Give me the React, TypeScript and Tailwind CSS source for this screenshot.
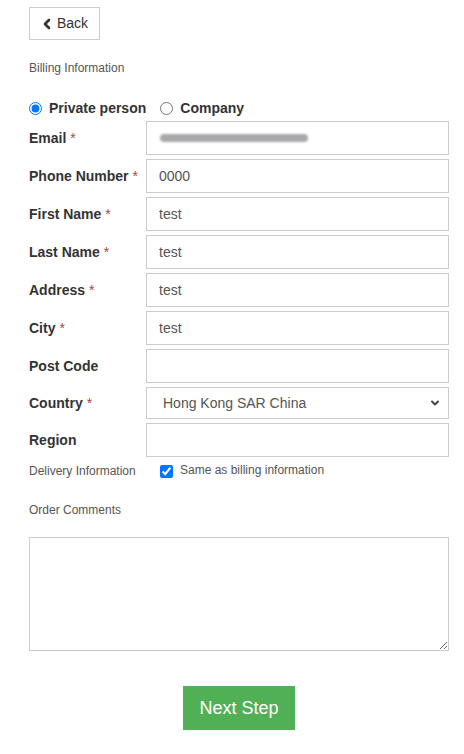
import React from 'react';
import { ChevronLeft, ChevronDown } from 'lucide-react';

interface Field {
  label: string;
  required?: boolean;
  value?: string;
}

const fields: Field[] = [
  { label: 'Phone Number', required: true, value: '0000' },
  { label: 'First Name', required: true, value: 'test' },
  { label: 'Last Name', required: true, value: 'test' },
  { label: 'Address', required: true, value: 'test' },
  { label: 'City', required: true, value: 'test' },
  { label: 'Post Code', value: '' },
];

const Label = ({ text, required }: { text: string; required?: boolean }) => (
  <label className="w-[117px] shrink-0 text-[14px] font-bold text-[#333]">
    {text}
    {required && <span className="ml-1 font-normal text-[#a94442]">*</span>}
  </label>
);

const inputCls =
  'h-[34px] w-full border border-[#ccc] bg-white px-[12px] text-[14px] text-[#555] outline-none';

export default function App() {
  return (
    <div className="min-h-screen bg-white pt-[7px] pl-[29px] pr-[15px] font-['Liberation_Sans',Arial,sans-serif]">
      <button className="flex h-[33px] w-[71px] items-center justify-center gap-[2px] border border-[#ccc] bg-white text-[14px] text-[#333]">
        <ChevronLeft className="h-[16px] w-[16px] -ml-[2px]" strokeWidth={4} />
        Back
      </button>

      <div className="mt-[20px] text-[12px] leading-[16px] text-[#555]">Billing Information</div>

      <div className="mt-[22px] flex h-[20px] items-center text-[14px] font-bold text-[#333]">
        <label className="flex items-center">
          <input type="radio" name="type" defaultChecked className="m-0 h-[13px] w-[13px]" />
          <span className="ml-[7px]">Private person</span>
        </label>
        <label className="ml-[14px] flex items-center">
          <input type="radio" name="type" className="m-0 h-[13px] w-[13px]" />
          <span className="ml-[7px]">Company</span>
        </label>
      </div>

      <div className="mt-[3px] flex flex-col gap-[4px]">
        <div className="flex items-center">
          <Label text="Email" required />
          <div className="relative w-full">
            <input className={inputCls} defaultValue="" />
            <span className="pointer-events-none absolute left-[14px] top-[13px] h-[8px] w-[148px] rounded-full bg-[#a8a8aa] blur-[1px]" />
          </div>
        </div>
        {fields.map((f) => (
          <div key={f.label} className="flex items-center">
            <Label text={f.label} required={f.required} />
            <input className={inputCls} defaultValue={f.value} />
          </div>
        ))}
        <div className="flex items-center">
          <Label text="Country" required />
          <div className="relative w-full">
            <select className="h-[32px] w-full appearance-none border border-[#ccc] bg-white pl-[16px] text-[14px] text-[#555] outline-none">
              <option>Hong Kong SAR China</option>
            </select>
            <ChevronDown
              className="pointer-events-none absolute right-[8px] top-[10px] h-[12px] w-[12px] text-[#444]"
              strokeWidth={4}
            />
          </div>
        </div>
        <div className="flex items-center">
          <Label text="Region" />
          <input className={inputCls} defaultValue="" />
        </div>
      </div>

      <div className="mt-[6px] flex h-[16px] items-center text-[12px] text-[#555]">
        <span className="w-[131px] shrink-0">Delivery Information</span>
        <label className="flex items-center">
          <input type="checkbox" defaultChecked className="m-0 h-[13px] w-[13px]" />
          <span className="ml-[7px] -mt-[3px]">Same as billing information</span>
        </label>
      </div>

      <div className="mt-[23px] text-[12px] leading-[16px] text-[#555]">Order Comments</div>

      <textarea className="mt-[19px] block h-[114px] w-full border border-[#ccc] outline-none" />

      <div className="mt-[35px] flex justify-center">
        <button className="h-[44px] w-[112px] bg-[#50b056] text-[18px] text-white">Next Step</button>
      </div>
    </div>
  );
}
